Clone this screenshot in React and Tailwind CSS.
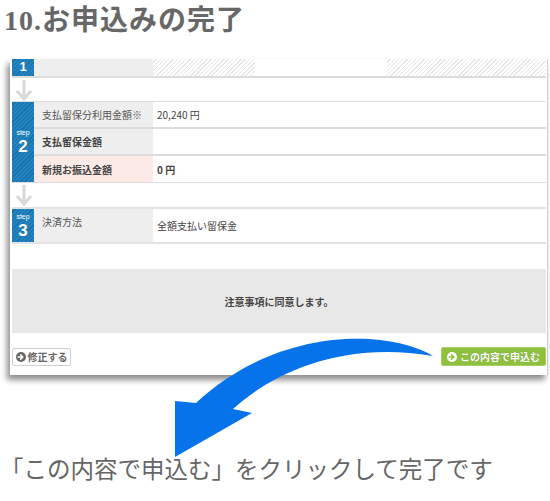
import React from 'react'

const hatch = 'bg-[repeating-linear-gradient(135deg,#ffffff_0px,#ffffff_2px,#e6e6e6_2px,#e6e6e6_3px)]'
const badgeBg = 'bg-[repeating-linear-gradient(135deg,#2183c0_0px,#2183c0_2px,#1a6fa6_2px,#1a6fa6_3px)]'

// Small gray down arrow between steps
const DownArrow = () => (
    <svg width="22" height="22" viewBox="0 0 22 22" className="block">
        <line x1="11" y1="1" x2="11" y2="17" stroke="#d8d8d8" strokeWidth="3" />
        <path d="M4 12 L11 20 L18 12" fill="none" stroke="#d8d8d8" strokeWidth="3" />
    </svg>
)

const CircleArrow = ({ bg, fg }) => (
    <svg width="10" height="10" viewBox="0 0 10 10" className="shrink-0">
        <circle cx="5" cy="5" r="5" fill={bg} />
        <path d="M2.2 5 H6.4 M4.6 2.8 L6.8 5 L4.6 7.2" fill="none" stroke={fg} strokeWidth="1.6" strokeLinecap="round" strokeLinejoin="round" />
    </svg>
)

const StepBadge = ({ num }) => (
    <div className={`w-[22px] shrink-0 ${badgeBg} flex flex-col items-center justify-center text-white leading-none`}>
        <span className="text-[7px] font-['Liberation_Sans',sans-serif] mb-[2px]">step</span>
        <span className="text-[17px] font-bold font-['Liberation_Sans',sans-serif]">{num}</span>
    </div>
)

export default function App() {
    const jp = "font-['Noto_Sans_CJK_JP','Noto_Sans',sans-serif]"

    return (
        <div className={`relative w-[550px] h-[501px] overflow-hidden bg-white ${jp}`}>
            {/* Title */}
            <div className="h-[59px] pl-[4px] pt-[4px]">
                <h1 className="text-[28px] leading-[34px] font-semibold tracking-[1px] text-[#676767] font-['Liberation_Serif','Noto_Sans_CJK_JP',serif]">
                    10.お申込みの完了
                </h1>
            </div>

            {/* Panel */}
            <div className="ml-[10px] w-[538px] h-[316px] bg-white pl-[2px] pr-[1px] border-r border-[#cfcfcf] shadow-[-3px_5px_6px_rgba(0,0,0,0.45)] text-[10px] text-[#555]">
                {/* Step 1 (clipped) */}
                <div className="flex h-[19px] border-b-2 border-[#dcdcdc]">
                    <div className={`w-[22px] shrink-0 ${badgeBg} flex justify-center pt-[1px]`}>
                        <span className="text-[13px] leading-none font-bold text-white font-['Liberation_Sans',sans-serif]">1</span>
                    </div>
                    <div className="w-[119px] bg-[#eeeeee]" />
                    <div className={`w-[102px] ${hatch}`} />
                    <div className="w-[132px] bg-white" />
                    <div className={`flex-1 ${hatch}`} />
                </div>

                <div className="h-[23px] pl-[1px] pt-[1px]"><DownArrow /></div>

                {/* Step 2 */}
                <div className="flex h-[82px] border-y border-[#dcdcdc]">
                    <StepBadge num="2" />
                    <div className="flex-1 flex flex-col">
                        <div className="flex h-[27px] border-b-2 border-[#dcdcdc]">
                            <div className="w-[119px] bg-[#eeeeee] flex items-center pl-[8px]">支払留保分利用金額※</div>
                            <div className="flex-1 flex items-center pl-[4px] text-[#444]">20,240 円</div>
                        </div>
                        <div className="flex h-[27px] border-b-2 border-[#dcdcdc]">
                            <div className="w-[119px] bg-[#eeeeee] flex items-center pl-[8px] font-bold text-[#444]">支払留保金額</div>
                            <div className="flex-1" />
                        </div>
                        <div className="flex flex-1">
                            <div className="w-[119px] bg-[#fbeae5] flex items-center pl-[8px] font-bold text-[#444]">新規お振込金額</div>
                            <div className="flex-1 flex items-center pl-[4px] font-bold text-[#444]">0 円</div>
                        </div>
                    </div>
                </div>

                <div className="h-[24px] pl-[1px] pt-[1px]"><DownArrow /></div>

                {/* Step 3 */}
                <div className="flex h-[37px] border-y-2 border-[#e4e4e4]">
                    <StepBadge num="3" />
                    <div className="w-[119px] bg-[#eeeeee] pl-[8px] pt-[5px]">決済方法</div>
                    <div className="flex-1 flex items-center pl-[4px] text-[#444]">全額支払い留保金</div>
                </div>

                {/* Agreement */}
                <div className="mt-[25px] h-[64px] bg-[#e8e8e8] flex items-center justify-center font-bold text-[#444]">
                    注意事項に同意します。
                </div>

                {/* Buttons */}
                <div className="mt-[14px] flex justify-between items-center">
                    <button className="h-[18px] w-[59px] flex items-center justify-center gap-[2px] border border-[#cfcfcf] rounded-[2px] bg-white text-[#666] font-bold text-[10px]">
                        <CircleArrow bg="#666" fg="#fff" />
                        修正する
                    </button>
                    <button className="h-[19px] w-[105px] flex items-center justify-center gap-[3px] rounded-[2px] bg-[#8fc13e] border border-[#a6cf6a] text-white font-bold text-[10px] [text-shadow:0_0_1px_rgba(0,0,0,0.3)]">
                        <CircleArrow bg="#fff" fg="#8fc13e" />
                        この内容で申込む
                    </button>
                </div>
            </div>

            {/* Caption */}
            <p className="mt-[80px] text-[23.5px] leading-[30px] text-[#666] font-['Liberation_Serif','Noto_Sans_CJK_JP',serif] whitespace-nowrap">
                「この内容で申込む」をクリックして完了です
            </p>

            {/* Blue curved arrow overlay */}
            <svg className="absolute inset-0 pointer-events-none" width="550" height="501" viewBox="0 0 550 501">
                <path
                    d="M433 356 C390 330 280 325 196 403 L175 401 L175 457 L252 413 L233 409 C270 375 340 340 433 356 Z"
                    fill="#0673ea"
                />
            </svg>
        </div>
    )
}
